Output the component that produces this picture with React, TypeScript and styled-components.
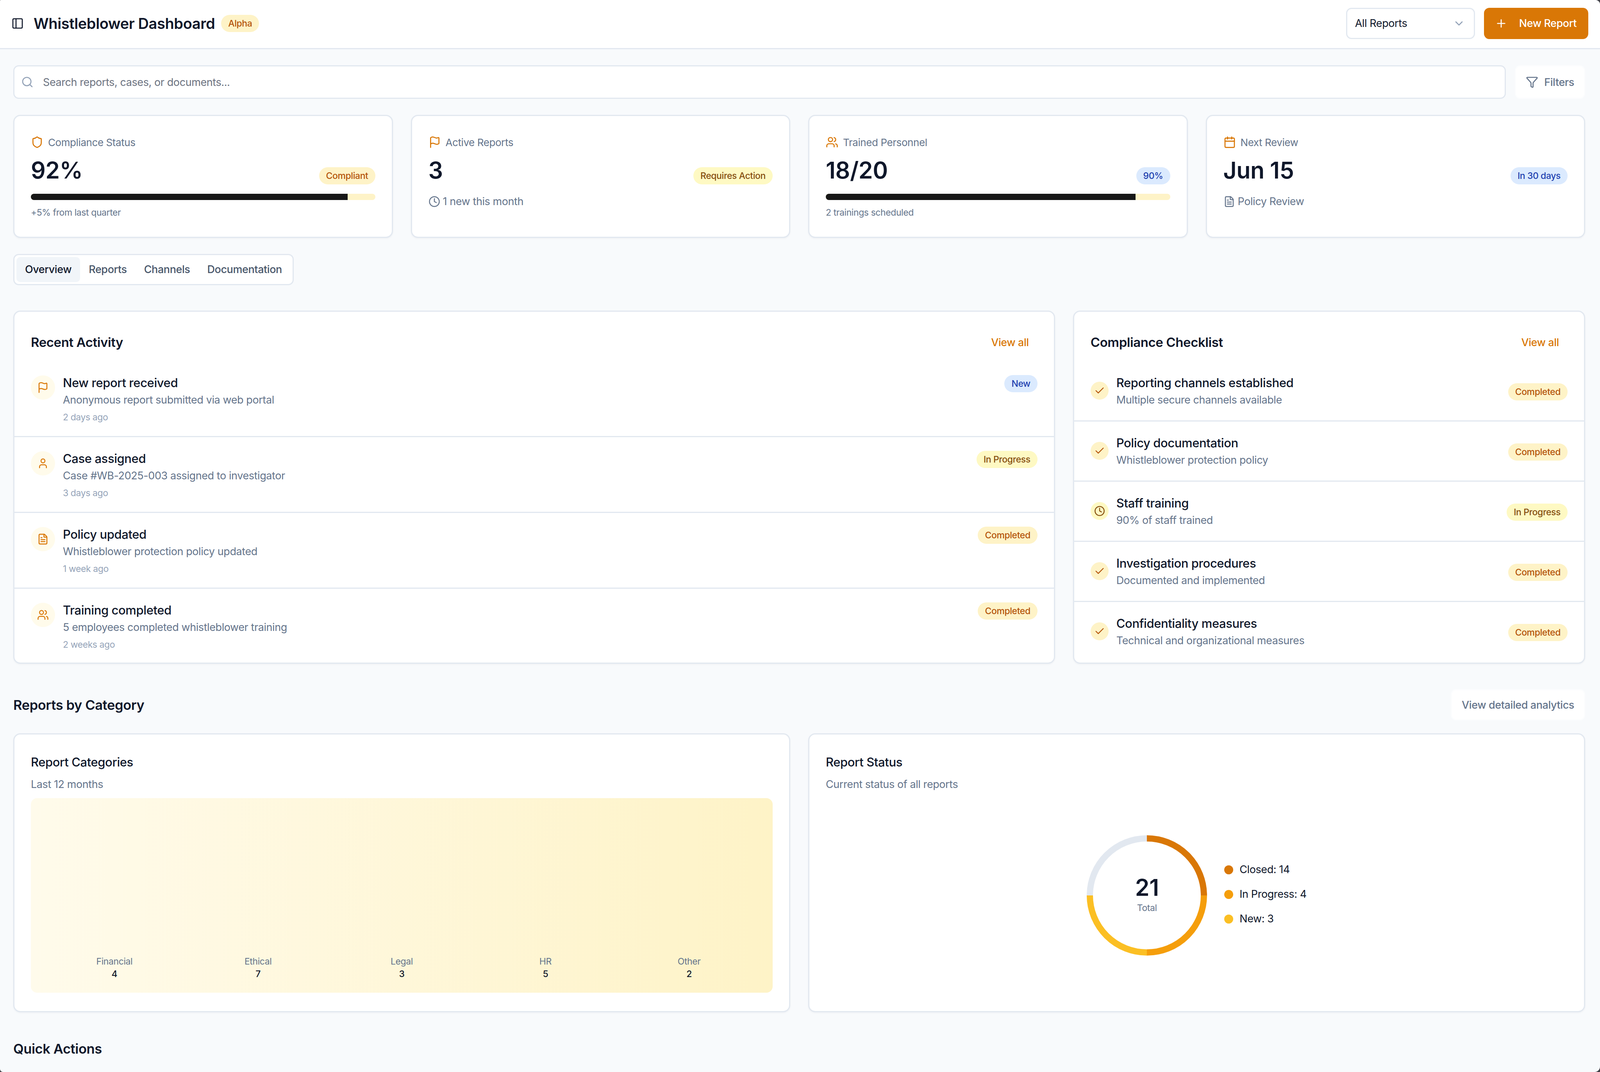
import { createGlobalStyle, styled } from 'styled-components'
import {
  Calendar,
  Check,
  ChevronDown,
  Clock,
  FileText,
  Flag,
  Funnel,
  PanelLeft,
  Plus,
  Search,
  Shield,
  User,
  Users,
} from 'lucide-react'

const GlobalStyle = createGlobalStyle`
  * {
    box-sizing: border-box;
  }

  html,
  body {
    margin: 0;
    height: 100%;
    overflow: hidden;
    background: #3f3f46;
  }

  body {
    font-family: Inter, "Liberation Sans", sans-serif;
    letter-spacing: -0.026em;
    color: #0f172a;
  }

  button {
    letter-spacing: inherit;
  }
`

type Tone = 'amber' | 'yellow' | 'blue'

const stats = [
  { icon: Shield, label: 'Compliance Status', value: '92%', badge: 'Compliant', tone: 'amber', progress: 92, note: '+5% from last quarter' },
  { icon: Flag, label: 'Active Reports', value: '3', badge: 'Requires Action', tone: 'yellow', meta: '1 new this month', metaIcon: Clock },
  { icon: Users, label: 'Trained Personnel', value: '18/20', badge: '90%', tone: 'blue', progress: 90, note: '2 trainings scheduled' },
  { icon: Calendar, label: 'Next Review', value: 'Jun 15', badge: 'In 30 days', tone: 'blue', meta: 'Policy Review', metaIcon: FileText },
] as const

const activity = [
  { icon: Flag, title: 'New report received', text: 'Anonymous report submitted via web portal', time: '2 days ago', badge: 'New', tone: 'blue' },
  { icon: User, title: 'Case assigned', text: 'Case #WB-2025-003 assigned to investigator', time: '3 days ago', badge: 'In Progress', tone: 'yellow' },
  { icon: FileText, title: 'Policy updated', text: 'Whistleblower protection policy updated', time: '1 week ago', badge: 'Completed', tone: 'amber' },
  { icon: Users, title: 'Training completed', text: '5 employees completed whistleblower training', time: '2 weeks ago', badge: 'Completed', tone: 'amber' },
] as const

const checklist = [
  { title: 'Reporting channels established', text: 'Multiple secure channels available', done: true },
  { title: 'Policy documentation', text: 'Whistleblower protection policy', done: true },
  { title: 'Staff training', text: '90% of staff trained', done: false },
  { title: 'Investigation procedures', text: 'Documented and implemented', done: true },
  { title: 'Confidentiality measures', text: 'Technical and organizational measures', done: true },
]

const categories = [
  { name: 'Financial', count: 4 },
  { name: 'Ethical', count: 7 },
  { name: 'Legal', count: 3 },
  { name: 'HR', count: 5 },
  { name: 'Other', count: 2 },
]

const statuses = [
  { label: 'Closed: 14', color: '#d97706', arc: 'M154 8A146 146 0 0 1 300 154' },
  { label: 'In Progress: 4', color: '#f59e0b', arc: 'M300 154A146 146 0 0 1 154 300' },
  { label: 'New: 3', color: '#fbbf24', arc: 'M154 300A146 146 0 0 1 8 154' },
]

export default function App() {
  return (
    <Page>
      <GlobalStyle />
      <Header>
        <HeaderLeft>
          <PanelLeft size={32} color="#0f172a" />
          <Title>Whistleblower Dashboard</Title>
          <Badge $tone="amber">Alpha</Badge>
        </HeaderLeft>
        <HeaderRight>
          <Select>
            All Reports
            <ChevronDown size={32} color="#94a3b8" />
          </Select>
          <PrimaryButton>
            <Plus size={32} />
            New Report
          </PrimaryButton>
        </HeaderRight>
      </Header>

      <Main>
        <SearchRow>
          <SearchBox>
            <Search size={32} color="#94a3b8" />
            Search reports, cases, or documents...
          </SearchBox>
          <GhostButton>
            <Funnel size={32} />
            Filters
          </GhostButton>
        </SearchRow>

        <StatGrid>
          {stats.map((s) => (
            <StatCard key={s.label}>
              <StatLabel>
                <s.icon size={32} color="#d97706" />
                {s.label}
              </StatLabel>
              <StatRow>
                <StatValue>{s.value}</StatValue>
                <Badge $tone={s.tone as Tone}>{s.badge}</Badge>
              </StatRow>
              {'progress' in s ? (
                <>
                  <Track>
                    <Fill style={{ width: `${s.progress}%` }} />
                  </Track>
                  <StatNote>{s.note}</StatNote>
                </>
              ) : (
                <StatMeta>
                  <s.metaIcon size={30} />
                  {s.meta}
                </StatMeta>
              )}
            </StatCard>
          ))}
        </StatGrid>

        <Tabs>
          <Tab $active>Overview</Tab>
          <Tab>Reports</Tab>
          <Tab>Channels</Tab>
          <Tab>Documentation</Tab>
        </Tabs>

        <ListGrid>
          <Card>
            <CardHeader>
              <CardTitle>Recent Activity</CardTitle>
              <LinkButton>View all</LinkButton>
            </CardHeader>
            {activity.map((a) => (
              <ActivityRow key={a.title}>
                <ActivityIcon>
                  <a.icon size={30} color="#d97706" />
                </ActivityIcon>
                <RowBody>
                  <RowTitle>{a.title}</RowTitle>
                  <RowText>{a.text}</RowText>
                  <RowTime>{a.time}</RowTime>
                </RowBody>
                <ActivityBadge $tone={a.tone}>{a.badge}</ActivityBadge>
              </ActivityRow>
            ))}
          </Card>

          <Card>
            <CardHeader>
              <CardTitle>Compliance Checklist</CardTitle>
              <LinkButton>View all</LinkButton>
            </CardHeader>
            {checklist.map((c) => (
              <CheckRow key={c.title}>
                <CheckIcon $done={c.done}>
                  {c.done ? <Check size={28} /> : <Clock size={28} />}
                </CheckIcon>
                <RowBody>
                  <RowTitle>{c.title}</RowTitle>
                  <RowText>{c.text}</RowText>
                </RowBody>
                <CheckBadge $tone={c.done ? 'amber' : 'yellow'}>
                  {c.done ? 'Completed' : 'In Progress'}
                </CheckBadge>
              </CheckRow>
            ))}
          </Card>
        </ListGrid>

        <SectionHead>
          <SectionTitle>Reports by Category</SectionTitle>
          <GhostButton>View detailed analytics</GhostButton>
        </SectionHead>

        <ChartGrid>
          <ChartCard>
            <ChartTitle>Report Categories</ChartTitle>
            <ChartSub>Last 12 months</ChartSub>
            <Plot>
              {categories.map((c) => (
                <PlotColumn key={c.name}>
                  <PlotLabel>{c.name}</PlotLabel>
                  <PlotValue>{c.count}</PlotValue>
                </PlotColumn>
              ))}
            </Plot>
          </ChartCard>

          <ChartCard>
            <ChartTitle>Report Status</ChartTitle>
            <ChartSub>Current status of all reports</ChartSub>
            <DonutArea>
              <Donut>
                <svg width="308" height="308" viewBox="0 0 308 308" fill="none" strokeWidth="16">
                  <path d="M8 154A146 146 0 0 1 154 8" stroke="#e2e8f0" />
                  {statuses.map((s) => (
                    <path key={s.label} d={s.arc} stroke={s.color} />
                  ))}
                </svg>
                <DonutCenter>
                  <DonutValue>21</DonutValue>
                  <DonutLabel>Total</DonutLabel>
                </DonutCenter>
              </Donut>
              <Legend>
                {statuses.map((s) => (
                  <LegendItem key={s.label}>
                    <LegendDot $color={s.color} />
                    {s.label}
                  </LegendItem>
                ))}
              </Legend>
            </DonutArea>
          </ChartCard>
        </ChartGrid>

        <QuickTitle>Quick Actions</QuickTitle>
      </Main>
    </Page>
  )
}

const toneStyles: Record<Tone, string> = {
  amber: 'background: #fef3c7; color: #b45309;',
  yellow: 'background: #fef9c3; color: #854d0e;',
  blue: 'background: #dbeafe; color: #1e40af;',
}

const Page = styled.div`
  height: 100vh;
  overflow: hidden;
  background: #f8fafc;
  border-radius: 3px 12px 14px 8px;
`

const Header = styled.header`
  display: flex;
  align-items: center;
  justify-content: space-between;
  height: 126px;
  padding: 0 30px 4px 29px;
  background: #fff;
  border-bottom: 3px solid #e2e8f0;
`

const HeaderLeft = styled.div`
  display: flex;
  align-items: center;
`

const Title = styled.h1`
  margin: 0 16px 0 25px;
  font-size: 38px;
  font-weight: 600;
  line-height: 56px;
`

const HeaderRight = styled.div`
  display: flex;
  align-items: center;
  gap: 23px;
`

const Select = styled.div`
  display: flex;
  align-items: center;
  justify-content: space-between;
  width: 330px;
  height: 80px;
  padding: 0 22px 0 20px;
  background: #fff;
  border: 3px solid #e2e8f0;
  border-radius: 14px;
  font-size: 27px;
  color: #0f172a;
`

const PrimaryButton = styled.button`
  display: flex;
  align-items: center;
  gap: 30px;
  height: 80px;
  padding: 0 30px 0 28px;
  background: #d97706;
  border: none;
  border-radius: 14px;
  color: #fff;
  font: 500 27px Inter, sans-serif;
`

const Badge = styled.span<{ $tone: Tone }>`
  display: inline-flex;
  align-items: center;
  flex-shrink: 0;
  height: 44px;
  padding: 0 18px;
  border-radius: 22px;
  font-size: 23px;
  font-weight: 500;
  ${(p) => toneStyles[p.$tone]}
`

const ActivityBadge = styled(Badge)`
  margin-top: 4px;
`

const CheckBadge = styled(Badge)`
  margin-top: 6px;
`

const Main = styled.main`
  padding: 41px 38px 0 34px;
`

const SearchRow = styled.div`
  display: flex;
  gap: 23px;
`

const SearchBox = styled.div`
  display: flex;
  flex: 1;
  align-items: center;
  gap: 24px;
  height: 86px;
  padding: 0 17px;
  background: #fff;
  border: 3px solid #e2e8f0;
  border-radius: 14px;
  font-size: 27px;
  color: #6b7280;
`

const GhostButton = styled.button`
  display: flex;
  align-items: center;
  gap: 15px;
  align-self: stretch;
  min-height: 80px;
  padding: 0 25px;
  background: #fff;
  border: 3px solid #fcfdfe;
  border-radius: 14px;
  color: #64748b;
  font: 500 27px Inter, sans-serif;
`

const StatGrid = styled.div`
  display: grid;
  grid-template-columns: repeat(4, 1fr);
  gap: 46px;
  margin-top: 41px;
`

const Card = styled.section`
  background: #fff;
  border: 3px solid #e2e8f0;
  border-radius: 18px;
  box-shadow: 0 2px 4px rgba(15, 23, 42, 0.04);
`

const StatCard = styled(Card)`
  height: 315px;
  padding: 51px 42px 0;
`

const StatLabel = styled.div`
  display: flex;
  align-items: center;
  gap: 12px;
  height: 32px;
  font-size: 26px;
  color: #64748b;
`

const StatRow = styled.div`
  display: flex;
  align-items: flex-end;
  justify-content: space-between;
  height: 72px;
  margin-top: 20px;
`

const StatValue = styled.div`
  font-size: 59px;
  font-weight: 600;
  line-height: 72px;
`

const Track = styled.div`
  height: 16px;
  margin-top: 24px;
  overflow: hidden;
  background: #fef3c7;
  border-radius: 8px;
`

const Fill = styled.div`
  height: 100%;
  background: #171717;
`

const StatNote = styled.div`
  margin-top: 16px;
  font-size: 23px;
  line-height: 32px;
  color: #64748b;
`

const StatMeta = styled.div`
  display: flex;
  align-items: center;
  gap: 7px;
  margin-top: 24px;
  font-size: 27px;
  line-height: 40px;
  color: #64748b;
`

const Tabs = styled.div`
  display: flex;
  align-items: center;
  width: fit-content;
  height: 80px;
  margin-top: 41px;
  padding: 0 5px;
  background: #fff;
  border: 3px solid #e2e8f0;
  border-radius: 14px;
`

const Tab = styled.div<{ $active?: boolean }>`
  height: 64px;
  padding: 0 22px;
  border-radius: 10px;
  background: ${(p) => (p.$active ? '#f1f5f9' : 'transparent')};
  color: ${(p) => (p.$active ? '#0f172a' : '#475569')};
  font-size: 27px;
  font-weight: 500;
  line-height: 64px;
`

const ListGrid = styled.div`
  display: grid;
  grid-template-columns: 2888fr 1420fr;
  gap: 46px;
  margin-top: 65px;
`

const CardHeader = styled.div`
  display: flex;
  align-items: center;
  justify-content: space-between;
  height: 124px;
  padding: 32px 42px 0;
`

const CardTitle = styled.h2`
  margin: 0;
  font-size: 33px;
  font-weight: 600;
`

const LinkButton = styled.div`
  padding: 0 22px;
  color: #d97706;
  font-size: 27px;
  font-weight: 500;
`

const ActivityRow = styled.div`
  display: flex;
  align-items: flex-start;
  gap: 20px;
  height: 194px;
  padding: 31px 42px 0;
  border-top: 3px solid #e2e8f0;

  ${CardHeader} + & {
    border-top-color: transparent;
  }

  &:last-child {
    height: 192px;
  }
`

const ActivityIcon = styled.div`
  display: flex;
  align-items: center;
  justify-content: center;
  flex-shrink: 0;
  width: 62px;
  height: 62px;
  margin-top: 5px;
  background: #fffbeb;
  border-radius: 50%;
`

const RowBody = styled.div`
  flex: 1;
  min-width: 0;
`

const RowTitle = styled.div`
  font-size: 31px;
  font-weight: 500;
  line-height: 48px;
`

const RowText = styled.div`
  font-size: 27px;
  line-height: 40px;
  color: #64748b;
`

const RowTime = styled.div`
  margin-top: 8px;
  font-size: 23px;
  line-height: 32px;
  color: #94a3b8;
`

const CheckRow = styled.div`
  display: flex;
  align-items: center;
  gap: 20px;
  height: 154px;
  padding: 31px 42px 32px;
  border-top: 3px solid #e2e8f0;

  ${CardHeader} + & {
    border-top-color: transparent;
  }
`

const CheckIcon = styled.div<{ $done: boolean }>`
  display: flex;
  align-items: center;
  justify-content: center;
  flex-shrink: 0;
  width: 46px;
  height: 46px;
  border-radius: 50%;
  background: ${(p) => (p.$done ? '#fef3c7' : '#fef9c3')};
  color: ${(p) => (p.$done ? '#b45309' : '#854d0e')};
`

const SectionHead = styled.div`
  display: flex;
  align-items: center;
  justify-content: space-between;
  margin-top: 65px;
`

const SectionTitle = styled.h2`
  margin: 0;
  font-size: 34.5px;
  font-weight: 600;
`

const ChartGrid = styled.div`
  display: grid;
  grid-template-columns: 1fr 1fr;
  gap: 46px;
  margin-top: 33px;
`

const ChartCard = styled(Card)`
  display: flex;
  flex-direction: column;
  height: 714px;
  padding: 46px 42px 47px;
`

const ChartTitle = styled.h3`
  margin: 0;
  font-size: 31px;
  font-weight: 500;
  line-height: 50px;
`

const ChartSub = styled.div`
  margin-top: 12px;
  font-size: 27px;
  line-height: 40px;
  color: #64748b;
`

const Plot = styled.div`
  display: grid;
  flex: 1;
  grid-template-columns: repeat(5, 1fr);
  align-items: end;
  margin-top: 15px;
  padding: 32px 30px;
  background: linear-gradient(90deg, #fffbeb, #fef3c7);
  border-radius: 16px;
`

const PlotColumn = styled.div`
  text-align: center;
  line-height: 32px;
  font-size: 23px;
`

const PlotLabel = styled.div`
  color: #64748b;
`

const PlotValue = styled.div`
  font-weight: 500;
  color: #0f172a;
`

const DonutArea = styled.div`
  display: flex;
  flex: 1;
  align-items: center;
  justify-content: center;
  gap: 44px;
  margin-top: 15px;
`

const Donut = styled.div`
  position: relative;
  width: 308px;
  height: 308px;

  svg {
    display: block;
  }
`

const DonutCenter = styled.div`
  position: absolute;
  inset: 0 0 8px;
  display: flex;
  flex-direction: column;
  align-items: center;
  justify-content: center;
`

const DonutValue = styled.div`
  font-size: 59px;
  font-weight: 600;
  line-height: 72px;
`

const DonutLabel = styled.div`
  font-size: 23px;
  line-height: 32px;
  color: #64748b;
`

const Legend = styled.div`
  display: flex;
  flex-direction: column;
  gap: 23px;
  padding-bottom: 6px;
`

const LegendItem = styled.div`
  display: flex;
  align-items: center;
  gap: 16px;
  font-size: 27px;
  line-height: 40px;
`

const LegendDot = styled.span<{ $color: string }>`
  width: 23px;
  height: 23px;
  border-radius: 50%;
  background: ${(p) => p.$color};
`

const QuickTitle = styled.h2`
  margin: 69px 0 0;
  font-size: 34.5px;
  font-weight: 600;
  line-height: 50px;
`
